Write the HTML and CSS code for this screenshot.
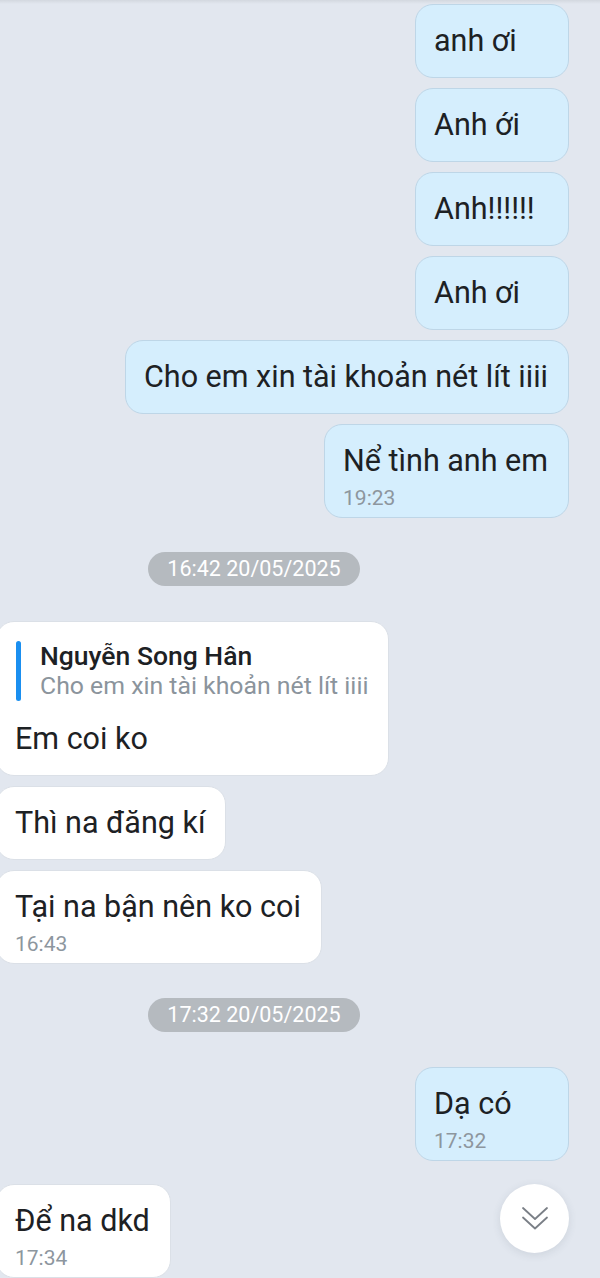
FILE: index.html
```html
<!doctype html>
<html lang="vi">
  <head>
    <meta charset="UTF-8" />
    <meta name="viewport" content="width=device-width, initial-scale=1.0" />
    <title>Chat</title>
    <link rel="stylesheet" href="styles.css">
  </head>
  <body>
    <div class="chat">
      <div class="msg me"><p class="text">anh ơi</p></div>
      <div class="msg me"><p class="text">Anh ới</p></div>
      <div class="msg me"><p class="text">Anh!!!!!!</p></div>
      <div class="msg me"><p class="text">Anh ơi</p></div>
      <div class="msg me"><p class="text">Cho em xin tài khoản nét lít iiii</p></div>
      <div class="msg me">
        <p class="text">Nể tình anh em</p>
        <span class="time">19:23</span>
      </div>

      <div class="date">16:42 20/05/2025</div>

      <div class="msg them">
        <div class="quote">
          <span class="quote-name">Nguyễn Song Hân</span>
          <span class="quote-text">Cho em xin tài khoản nét lít iiii</span>
        </div>
        <p class="text">Em coi ko</p>
      </div>
      <div class="msg them"><p class="text">Thì na đăng kí</p></div>
      <div class="msg them">
        <p class="text">Tại na bận nên ko coi</p>
        <span class="time">16:43</span>
      </div>

      <div class="date">17:32 20/05/2025</div>

      <div class="msg me">
        <p class="text">Dạ có</p>
        <span class="time">17:32</span>
      </div>
      <div class="msg them last">
        <p class="text">Để na dkd</p>
        <span class="time">17:34</span>
      </div>
    </div>

    <button class="scroll-down" aria-label="Cuộn xuống">
      <svg width="28" height="28" viewBox="0 0 28 28" fill="none" stroke="#7a7f86" stroke-width="1.8" stroke-linecap="round" stroke-linejoin="round">
        <path d="M2 3 L14 14 L26 3" />
        <path d="M2 12.5 L14 23.5 L26 12.5" />
      </svg>
    </button>
  </body>
</html>
```

FILE: styles.css
```css
* {
  box-sizing: border-box;
  margin: 0;
  padding: 0;
}

html,
body {
  height: 1278px;
  overflow: hidden;
}

body {
  position: relative;
  font-family: Roboto, "Noto Sans", "Liberation Sans", sans-serif;
  color: #1d2124;
  background: linear-gradient(#d3d8df 0, #e2e7ef 4px) #e2e7ef;
}

.chat {
  display: flex;
  flex-direction: column;
  gap: 10px;
  padding-top: 4px;
}

.msg {
  display: flex;
  flex-direction: column;
  min-width: 154px;
  padding: 19px 20px 19px 18px;
  border-radius: 18px;
}

.me {
  align-self: flex-end;
  margin-right: 31px;
  background: #d5eefd;
  border: 1px solid #bed6e7;
}

.them {
  align-self: flex-start;
  margin-left: -4px;
  background: #ffffff;
  border: 1px solid #dbe0e7;
}

.text {
  font-size: 30.5px;
  line-height: 34px;
  white-space: nowrap;
}

.time {
  margin-top: 8px;
  margin-bottom: -12px;
  font-size: 21px;
  line-height: 24px;
  color: #8d969e;
}

.date {
  align-self: flex-start;
  margin: 24px 0 25px 148px;
  width: 212px;
  height: 34px;
  line-height: 34px;
  text-align: center;
  border-radius: 17px;
  background: #b5babf;
  color: #ffffff;
  font-size: 21.5px;
}

.quote {
  display: flex;
  flex-direction: column;
  position: relative;
  margin-bottom: 21px;
  padding-left: 25px;
}

.quote::before {
  content: "";
  position: absolute;
  left: 1px;
  top: 0;
  bottom: 0;
  width: 5px;
  border-radius: 3px;
  background: #1a8ff0;
}

.quote-name {
  font-size: 26.5px;
  line-height: 30px;
  font-weight: 500;
  color: #1d2124;
}

.quote-text {
  font-size: 24.8px;
  line-height: 30px;
  color: #8b949c;
  white-space: nowrap;
}

.last {
  margin-top: 13px;
}

.scroll-down {
  position: absolute;
  left: 500px;
  top: 1184px;
  width: 69px;
  height: 69px;
  display: flex;
  align-items: center;
  justify-content: center;
  border: none;
  border-radius: 50%;
  background: #ffffff;
  box-shadow: 0 2px 8px rgba(60, 70, 90, 0.12);
}
```
